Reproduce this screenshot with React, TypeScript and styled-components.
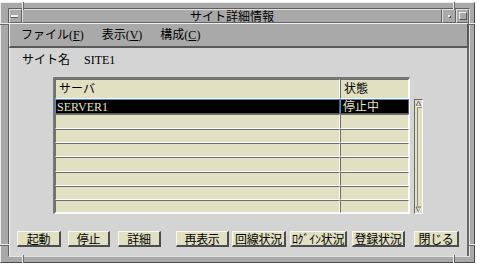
import React from 'react';
import styled, { createGlobalStyle } from 'styled-components';

const JP = `"Noto Sans CJK JP", sans-serif`;
const MIX = `"Liberation Serif", "Noto Sans CJK JP", serif`;

const GRAY = '#a9a9a9';
const LIGHT = '#d4d4d4';
const BEIGE = '#e2e0c2';
const DARK = '#5e5e5e';
const HI = '#ececec';

const Global = createGlobalStyle`
  html, body { margin: 0; padding: 0; background: #ffffff; }
  body { font-family: ${JP}; color: #000; }
`;

const Frame = styled.div`
  position: relative;
  box-sizing: border-box;
  width: 475px;
  height: 261px;
  margin-top: 2px;
  background: ${GRAY};
  border-top: 1px solid ${HI};
  border-left: 1px solid ${HI};
  border-right: 1px solid #4a4a4a;
  border-bottom: 1px solid #4a4a4a;
  padding: 5px 4px 5px 7px;
  display: flex;
`;

const Mark = styled.span<{ $x?: number; $y?: number; $v?: boolean; $len: number; $end?: boolean }>`
  position: absolute;
  background: #e8e8e8;
  box-shadow: ${(p) => (p.$v ? '1px 0 0 #6a6a6a' : '0 1px 0 #6a6a6a')};
  ${(p) =>
    p.$v
      ? `width: 1px; height: ${p.$len}px; left: ${p.$x}px; ${p.$end ? 'bottom: -1px;' : 'top: -1px;'}`
      : `height: 1px; width: ${p.$len}px; top: ${p.$y}px; ${p.$end ? 'right: -1px;' : 'left: -1px;'}`}
`;

const Body = styled.div`
  flex: 1;
  display: flex;
  flex-direction: column;
  border-top: 1px solid ${DARK};
  border-left: 1px solid ${DARK};
  border-right: 1px solid #e2e2e2;
  border-bottom: 1px solid #e2e2e2;
`;

const TitleBar = styled.div`
  display: flex;
  height: 14px;
`;

const Bevel = styled.div<{ $w?: number }>`
  box-sizing: border-box;
  height: 14px;
  ${(p) => (p.$w ? `width: ${p.$w}px;` : 'flex: 1;')}
  background: ${GRAY};
  border-top: 1px solid #dedede;
  border-left: 1px solid #dedede;
  border-right: 1px solid #626262;
  border-bottom: 1px solid #626262;
  display: flex;
  align-items: center;
  justify-content: center;
`;

const TitleText = styled.span`
  font-family: ${JP};
  font-size: 12px;
  line-height: 12px;
  color: #000;
`;

const MenuGlyph = styled.span`
  width: 7px;
  height: 2px;
  margin-right: 3px;
  background: #f2f2f2;
  box-shadow: 0 1px 0 #5a5a5a;
`;

const DotGlyph = styled.span`
  width: 2px;
  height: 2px;
  background: #f0f0f0;
  box-shadow: 1px 1px 0 #4a4a4a;
`;

const BoxGlyph = styled.span`
  box-sizing: border-box;
  width: 8px;
  height: 8px;
  border-top: 1px solid #f0f0f0;
  border-left: 1px solid #f0f0f0;
  border-right: 1px solid #555;
  border-bottom: 1px solid #555;
`;

const MenuBar = styled.div`
  box-sizing: border-box;
  height: 25px;
  background: ${GRAY};
  border-top: 1px solid #f0f0f0;
  border-left: 1px solid #f0f0f0;
  border-right: 2px solid #595959;
  border-bottom: 2px solid #595959;
  display: flex;
  align-items: center;
  gap: 18px;
  padding-left: 11px;
`;

const MenuItem = styled.span`
  font-family: ${MIX};
  font-size: 12px;
  line-height: 14px;
  color: #000;
  u { text-decoration: underline; text-underline-offset: 1px; }
`;

const Content = styled.div`
  flex: 1;
  box-sizing: border-box;
  background: ${LIGHT};
  border-left: 1px solid #f2f2f2;
  border-right: 2px solid #6a6a6a;
  display: flex;
  flex-direction: column;
  padding: 5px 0 0 12px;
`;

const SiteLine = styled.div`
  font-family: ${MIX};
  font-size: 12px;
  line-height: 15px;
  height: 15px;
  display: flex;
  gap: 14px;
`;

const ListArea = styled.div`
  display: flex;
  margin: 9px 0 0 31px;
  align-items: flex-start;
`;

const Table = styled.div`
  display: grid;
  grid-template-columns: 285px 69px;
  border-top: 2px solid #757575;
  border-left: 2px solid #757575;
  border-right: 1px solid #fafafa;
  border-bottom: 1px solid #fafafa;
`;

const Cell = styled.div<{ $h: number; $sel?: boolean; $pad: number }>`
  box-sizing: border-box;
  height: ${(p) => p.$h}px;
  background: ${(p) => (p.$sel ? '#000' : BEIGE)};
  color: ${(p) => (p.$sel ? '#e4e2c6' : '#000')};
  border-top: 1px solid ${(p) => (p.$sel ? '#4f86dc' : '#6f6f6f')};
  border-left: 1px solid ${(p) => (p.$sel ? '#4f86dc' : '#6f6f6f')};
  border-right: 1px solid ${(p) => (p.$sel ? '#5c5c5c' : '#fbfbfb')};
  border-bottom: 1px solid ${(p) => (p.$sel ? '#5c5c5c' : '#fbfbfb')};
  font-family: ${MIX};
  font-size: 12px;
  line-height: 12px;
  padding-left: ${(p) => p.$pad}px;
  display: flex;
  align-items: center;
  white-space: nowrap;
  overflow: hidden;
`;

const Scroll = styled.div`
  box-sizing: border-box;
  width: 9px;
  height: 115px;
  margin: 22px 0 0 4px;
  background: ${BEIGE};
  border-top: 1px solid #6a6a6a;
  border-left: 1px solid #6a6a6a;
  border-right: 1px solid #fafafa;
  border-bottom: 1px solid #fafafa;
  display: flex;
  flex-direction: column;
  align-items: stretch;
`;

const Arrow = styled.svg`
  display: block;
  width: 7px;
  height: 7px;
  flex: none;
`;

const Slider = styled.div`
  flex: 1;
  margin-left: 2px;
  border-left: 1px solid #8a8a8a;
  border-top: 1px solid #8a8a8a;
`;

const ButtonRow = styled.div`
  display: flex;
  margin: 17px 0 0 -5px;
`;

const Button = styled.button<{ $w: number; $ml: number }>`
  box-sizing: border-box;
  width: ${(p) => p.$w}px;
  height: 16px;
  margin-left: ${(p) => p.$ml}px;
  padding: 0;
  background: ${BEIGE};
  border-top: 1px solid #f8f8ee;
  border-left: 1px solid #f8f8ee;
  border-right: 2px solid #4c4c4c;
  border-bottom: 2px solid #4c4c4c;
  border-radius: 0;
  font-family: ${JP};
  font-size: 12px;
  line-height: 12px;
  color: #000;
  display: flex;
  align-items: center;
  justify-content: center;
  white-space: nowrap;
  letter-spacing: -0.3px;
`;

const rows = [
  { name: 'SERVER1', state: '停止中', h: 15, sel: true },
  { name: '', state: '', h: 15 },
  { name: '', state: '', h: 14 },
  { name: '', state: '', h: 14 },
  { name: '', state: '', h: 15 },
  { name: '', state: '', h: 14 },
  { name: '', state: '', h: 14 },
  { name: '', state: '', h: 13 },
];

const buttons = [
  { label: '起動', x0: 17, x1: 61 },
  { label: '停止', x0: 68, x1: 110 },
  { label: '詳細', x0: 118, x1: 161 },
  { label: '再表示', x0: 176, x1: 229 },
  { label: '回線状況', x0: 232, x1: 286 },
  { label: 'ﾛｸﾞｲﾝ状況', x0: 290, x1: 347 },
  { label: '登録状況', x0: 352, x1: 405 },
  { label: '閉じる', x0: 414, x1: 459 },
];

export default function App() {
  let prev = 17;
  return (
    <>
      <Global />
      <Frame>
        <Mark $v $x={21} $len={8} />
        <Mark $v $x={452} $len={8} />
        <Mark $v $x={21} $len={8} $end />
        <Mark $v $x={452} $len={8} $end />
        <Mark $y={20} $len={9} />
        <Mark $y={20} $len={6} $end />
        <Mark $y={241} $len={9} />
        <Mark $y={241} $len={6} $end />
        <Body>
          <TitleBar>
            <Bevel $w={13}>
              <MenuGlyph />
            </Bevel>
            <Bevel>
              <TitleText>サイト詳細情報</TitleText>
            </Bevel>
            <Bevel $w={14}>
              <DotGlyph />
            </Bevel>
            <Bevel $w={13}>
              <BoxGlyph />
            </Bevel>
          </TitleBar>
          <MenuBar>
            <MenuItem>
              ファイル(<u>F</u>)
            </MenuItem>
            <MenuItem>
              表示(<u>V</u>)
            </MenuItem>
            <MenuItem>
              構成(<u>C</u>)
            </MenuItem>
          </MenuBar>
          <Content>
            <SiteLine>
              <span>サイト名</span>
              <span>SITE1</span>
            </SiteLine>
            <ListArea>
              <Table>
                <Cell $h={20} $pad={3}>サーバ</Cell>
                <Cell $h={20} $pad={3}>状態</Cell>
                {rows.map((r, i) => (
                  <React.Fragment key={i}>
                    <Cell $h={r.h} $sel={r.sel} $pad={1}>
                      {r.name}
                    </Cell>
                    <Cell $h={r.h} $sel={r.sel} $pad={2}>
                      {r.state}
                    </Cell>
                  </React.Fragment>
                ))}
              </Table>
              <Scroll>
                <Arrow viewBox="0 0 7 7">
                  <path d="M3.5 1 L6 6 L1 6 Z" fill="none" stroke="#6a6a6a" strokeWidth="1" />
                  <path d="M1 6.5 H6.5" stroke="#fafafa" strokeWidth="1" />
                </Arrow>
                <Slider />
                <Arrow viewBox="0 0 7 7">
                  <path d="M1 1 L6 1 L3.5 6 Z" fill="none" stroke="#6a6a6a" strokeWidth="1" />
                  <path d="M4 6 L6.5 1" stroke="#fafafa" strokeWidth="1" />
                </Arrow>
              </Scroll>
            </ListArea>
            <ButtonRow>
              {buttons.map((b) => {
                const ml = b.x0 - prev;
                prev = b.x1;
                return (
                  <Button key={b.label} $w={b.x1 - b.x0} $ml={ml}>
                    {b.label}
                  </Button>
                );
              })}
            </ButtonRow>
          </Content>
        </Body>
      </Frame>
    </>
  );
}
